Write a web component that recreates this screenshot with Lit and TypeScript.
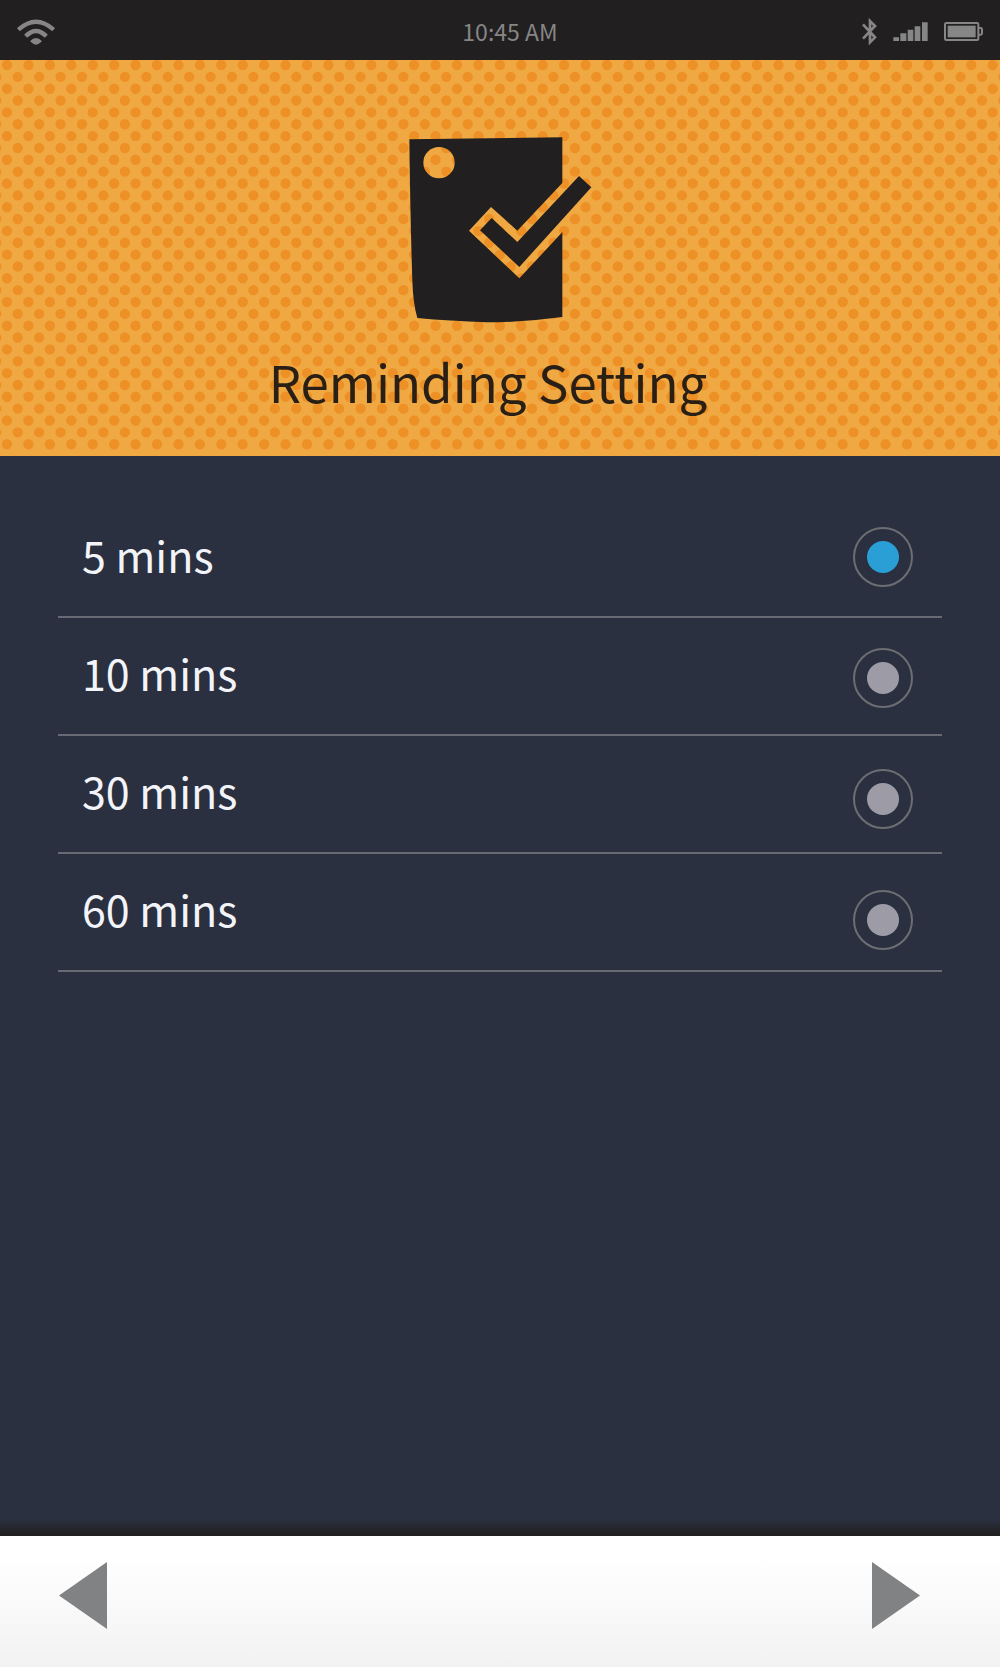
import { LitElement, html, css } from "lit";
import { customElement, property, state } from "lit/decorators.js";

@customElement("status-bar")
export class StatusBar extends LitElement {
  @property() time = "";

  static styles = css`
    :host {
      display: block;
      background: #211f20;
      color: #868686;
    }
    .bar {
      display: grid;
      grid-template-columns: 1fr auto 1fr;
      align-items: center;
      box-sizing: border-box;
      min-height: 60px;
      padding: 3px 17px 0;
    }
    .time {
      padding: 0 0 2px 20px;
      font-size: 23px;
      line-height: 28px;
    }
    .indicators {
      display: flex;
      align-items: center;
      justify-content: flex-end;
      gap: 16px;
    }
    svg {
      display: block;
    }
  `;

  render() {
    return html`
      <header class="bar">
        <svg width="38" height="26" viewBox="50 55 114 78" role="img" aria-label="Wi-Fi" fill="none" stroke="currentColor">
          <path d="M54 87 Q107 39 160 87" stroke-width="13" />
          <path d="M76 107 Q107 75 138 107" stroke-width="13" />
          <path d="M89 122 Q107 102 125 122 Q115 132 107 132 Q99 132 89 122Z" fill="currentColor" stroke="none" />
        </svg>
        <time class="time">${this.time}</time>
        <div class="indicators">
          <svg width="15" height="27" viewBox="67 54 45 81" role="img" aria-label="Bluetooth" fill="none" stroke="currentColor" stroke-width="8">
            <path d="M70 73 L106 112 L91 127 V63 L106 78 L70 116" />
          </svg>
          <svg width="35" height="19" viewBox="160 65 105 57" role="img" aria-label="Signal" fill="currentColor">
            <path d="M161 111h17v11h-17zM182 99h18v23h-18zM204 88h17v34h-17zM225 78h17v44h-17zM247 66h17v56h-17z" />
          </svg>
          <svg width="39" height="19" viewBox="313 66 117 57" role="img" aria-label="Battery" fill="none" stroke="currentColor" stroke-width="6">
            <rect x="316" y="69" width="100" height="51" rx="4" />
            <path d="M416 84h7q4 0 4 4v12q0 4-4 4h-7" />
            <path d="M324 77h84v35h-84z" fill="currentColor" stroke="none" />
          </svg>
        </div>
      </header>
    `;
  }
}

const TILE = { width: 150, height: 237, columns: 7, rows: 10 };
const DOT_RADIUS = 5.2;

/** Staggered lattice of dots that fills one pattern tile, edges included. */
function dotLattice(): string {
  const stepX = TILE.width / TILE.columns;
  const stepY = TILE.height / TILE.rows / 2;
  let path = "";
  for (let row = -1; row <= TILE.rows * 2; row++) {
    for (let column = -1; column <= TILE.columns; column++) {
      const x = (column + (row % 2 ? 0.5 : 0)) * stepX;
      const y = row * stepY;
      path +=
        `M${(x - DOT_RADIUS).toFixed(2)} ${y.toFixed(2)}` +
        `a${DOT_RADIUS} ${DOT_RADIUS} 0 1 0 ${DOT_RADIUS * 2} 0` +
        `a${DOT_RADIUS} ${DOT_RADIUS} 0 1 0 ${-DOT_RADIUS * 2} 0z`;
    }
  }
  return path;
}

@customElement("hero-banner")
export class HeroBanner extends LitElement {
  @property() heading = "";

  static styles = css`
    :host {
      display: block;
      color: #2a1f14;
    }
    .hero {
      position: relative;
      display: flex;
      flex-direction: column;
      align-items: center;
      box-sizing: border-box;
      min-height: 396px;
      padding: 77px 24px 32px;
      background: #f0a942;
    }
    .dots {
      position: absolute;
      top: 0;
      left: 0;
      width: 100%;
      height: calc(100% - 5px);
    }
    .note {
      position: relative;
      display: block;
    }
    .title {
      position: relative;
      margin: 22px 0 0;
      padding-right: 24px;
      font-size: 51px;
      font-weight: 400;
      line-height: 72px;
    }
  `;

  render() {
    return html`
      <section class="hero">
        <svg class="dots" aria-hidden="true">
          <defs>
            <pattern id="dots" x="7" y="5" width=${TILE.width} height=${TILE.height} patternUnits="userSpaceOnUse">
              <path d=${dotLattice()} fill="#ed9127" />
            </pattern>
          </defs>
          <rect width="100%" height="100%" fill="url(#dots)" />
        </svg>
        <svg class="note" width="183" height="186" viewBox="57 50 549 558" aria-hidden="true">
          <mask id="cut" maskUnits="userSpaceOnUse" x="50" y="40" width="560" height="580">
            <rect x="50" y="40" width="560" height="580" fill="#fff" />
            <circle cx="147" cy="127" r="47" />
            <path d="M237 331 L303 260 L382 331 L560 142 L640 203 L388 474Z" />
          </mask>
          <path
            d="M58 57 L517 51 V590 Q400 606 290 606 Q180 602 82 593 Q69 550 67 480 Q61 300 58 57Z"
            fill="#211f20"
            mask="url(#cut)"
          />
          <path d="M270 330 L305 293 L382 365 L567 167 L604 201 L388 440Z" fill="#211f20" />
        </svg>
        <h1 class="title">${this.heading}</h1>
      </section>
    `;
  }
}

@customElement("reminder-options")
export class ReminderOptions extends LitElement {
  @property({ attribute: false }) options: number[] = [];
  @state() private selected = 5;

  static styles = css`
    :host {
      display: block;
      color: #f3f4f9;
    }
    .options {
      display: grid;
      margin: 0;
      padding: 44px 58px;
      border: 0;
    }
    .labels,
    .radios {
      grid-area: 1 / 1;
      display: flex;
      flex-direction: column;
    }
    .label {
      display: flex;
      align-items: center;
      box-sizing: border-box;
      min-height: 118px;
      padding: 0 24px 8px;
      border-bottom: 2px solid #676973;
      font-size: 43px;
      line-height: 60px;
      cursor: pointer;
    }
    .radios {
      justify-self: end;
      gap: 61px;
      padding: 27px 29px 0;
    }
    .radio {
      appearance: none;
      display: grid;
      box-sizing: border-box;
      width: 60px;
      height: 60px;
      margin: 0;
      padding: 12px;
      border: 2px solid #6d6e73;
      border-radius: 50%;
      cursor: pointer;
    }
    .radio::before {
      content: "";
      border-radius: 50%;
      background: #9d9ba6;
    }
    .radio:checked::before {
      background: #2a9fd6;
    }
    .radio:focus-visible {
      outline: 2px solid #2a9fd6;
      outline-offset: 4px;
    }
  `;

  render() {
    return html`
      <fieldset class="options" aria-label="Reminder interval">
        <div class="labels">
          ${this.options.map((m) => html`<label class="label" for="mins-${m}">${m} mins</label>`)}
        </div>
        <div class="radios">
          ${this.options.map(
            (m) => html`<input
              class="radio"
              type="radio"
              name="interval"
              id="mins-${m}"
              .checked=${m === this.selected}
              @change=${() => (this.selected = m)}
            />`
          )}
        </div>
      </fieldset>
    `;
  }
}

@customElement("nav-footer")
export class NavFooter extends LitElement {
  static styles = css`
    :host {
      display: block;
    }
    .shade {
      height: 16px;
      background: linear-gradient(#2a303f, #211f20 90%);
    }
    .bar {
      display: flex;
      justify-content: space-between;
      align-items: flex-start;
      box-sizing: border-box;
      min-height: 131px;
      padding: 26px 80px 38px 59px;
      background: linear-gradient(#fff 15%, #f2f2f2);
    }
    .step {
      padding: 0;
      border: 0;
      background: none;
      color: #818283;
      cursor: pointer;
    }
    svg {
      display: block;
    }
  `;

  render() {
    return html`
      <div class="shade"></div>
      <nav class="bar">
        <button class="step" aria-label="Previous">
          <svg width="48" height="67" viewBox="0 0 48 67"><path d="M48 0V67L0 33.5Z" fill="currentColor" /></svg>
        </button>
        <button class="step" aria-label="Next">
          <svg width="48" height="67" viewBox="0 0 48 67"><path d="M0 0V67L48 33.5Z" fill="currentColor" /></svg>
        </button>
      </nav>
    `;
  }
}

@customElement("app-root")
export class AppRoot extends LitElement {
  static styles = css`
    :host {
      display: flex;
      flex-direction: column;
      min-height: 100vh;
      background: #2a303f;
      font-family: "Noto Sans CJK SC", "Noto Sans", sans-serif;
    }
    .content {
      flex: 1;
    }
  `;

  private readonly options = [5, 10, 30, 60];

  render() {
    return html`
      <status-bar time="10:45 AM"></status-bar>
      <hero-banner heading="Reminding Setting"></hero-banner>
      <main class="content">
        <reminder-options .options=${this.options}></reminder-options>
      </main>
      <nav-footer></nav-footer>
    `;
  }
}
